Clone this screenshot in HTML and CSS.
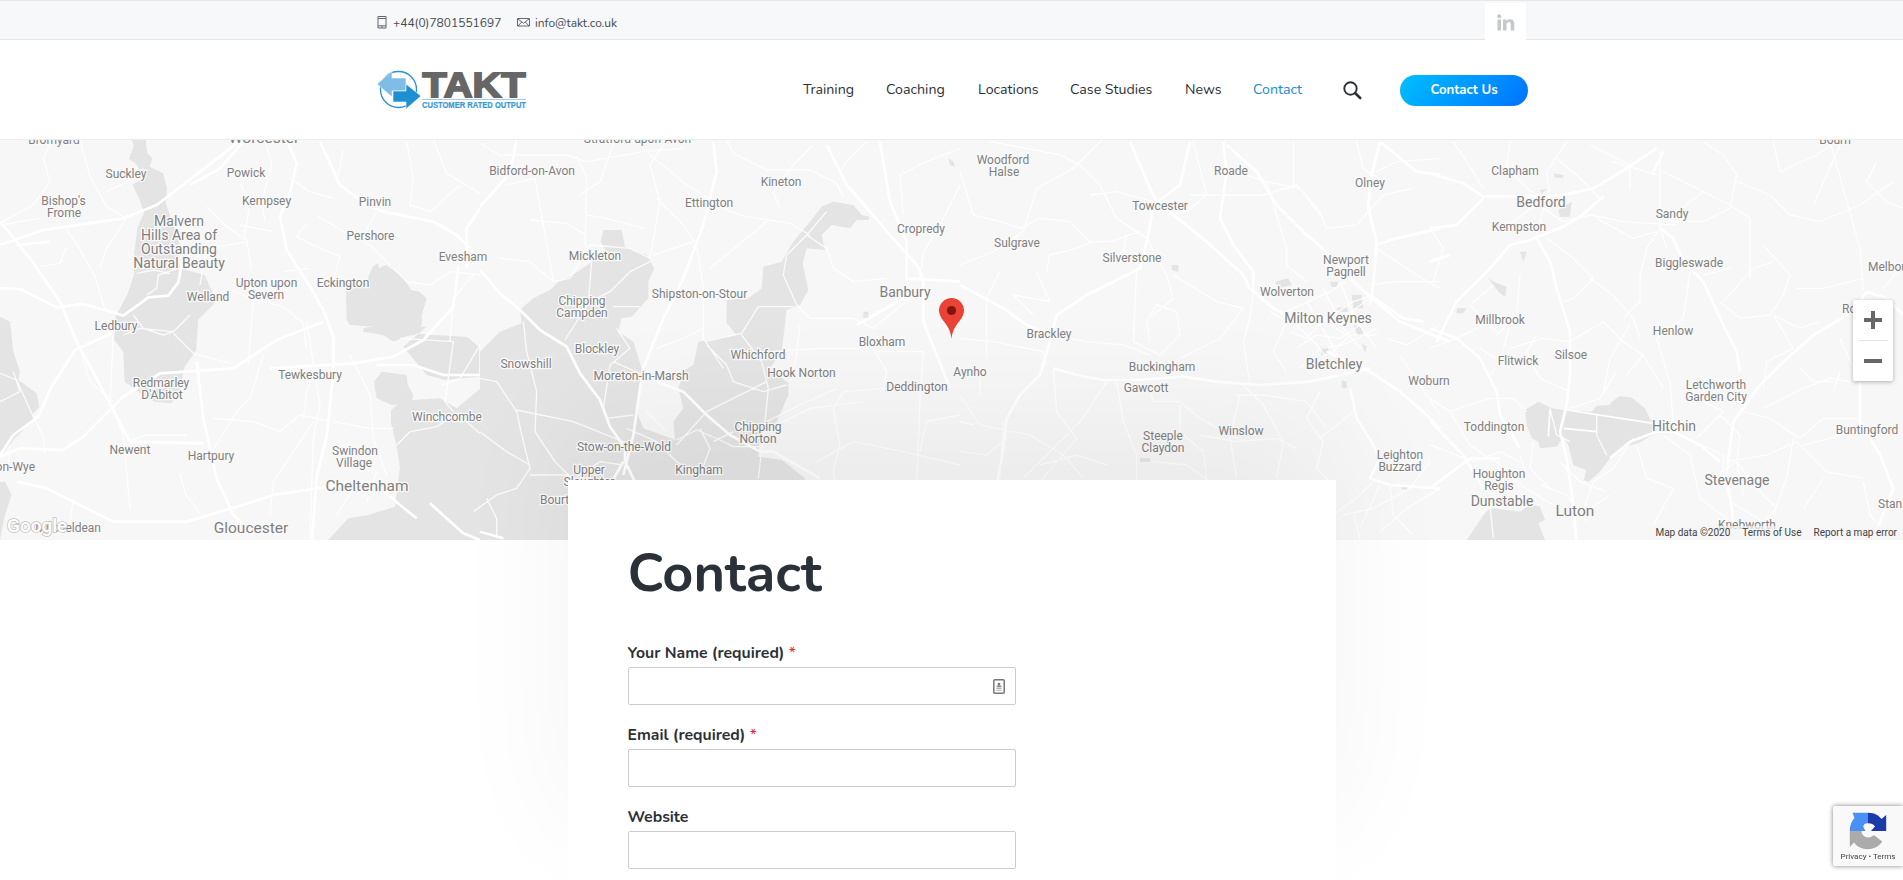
FILE: index.html
```html
<!DOCTYPE html>
<html lang="en">
<head>
<meta charset="utf-8">
<title>Contact - TAKT</title>
<link rel="stylesheet" href="styles.css">
</head>
<body>
<div class="topbar">
  <div class="container topbar-inner">
    <div class="topbar-contacts">
      <span class="contact-item"><svg class="ico-phone" width="10" height="13" viewBox="0 0 10 13"><path d="M1 .5h8v11.500h-8zM1 2.500h8M1 9.800h8M4 11h2" fill="none" stroke="#62676f"/></svg><span class="phone">+44(0)7801551697</span></span>
      <span class="contact-item"><svg class="ico-mail" width="13" height="9" viewBox="0 0 13 9"><path d="M.5 .5h12v7.500h-12zM1 1l5.500 4.200L12 1M1 8l3.700-4M12 8L8.300 4" fill="none" stroke="#555b63" stroke-width=".9"/></svg><span class="email">info@takt.co.uk</span></span>
    </div>
    <a class="linkedin"><svg width="18" height="17" viewBox="0 0 18 17" fill="#c4c7cb"><circle cx="2.200" cy="2.200" r="2"/><path d="M.5 5.500h3.500V16.500H.5zM6 5.500h3.300V7c.8-1.200 2-1.800 3.600-1.800 3 0 4.400 1.800 4.400 4.800v6.500h-3.500v-6c0-1.600-.6-2.500-1.900-2.500-1.500 0-2.400 1-2.400 2.600v5.900H6z"/></svg></a>
  </div>
</div>
<header class="header">
  <div class="container header-inner">
    <svg class="logo" width="152" height="44" viewBox="375 68 152 44">
      <circle cx="398.500" cy="89.500" r="18" fill="none" stroke="#2b8fcb" stroke-width="1.300"/>
      <path d="M377 84l15-13v7h14v13h-14v6z" fill="#7fbde6" stroke="#fff" stroke-width=".6"/>
      <path d="M393 91h13v-7l15 12-15 13v-7h-13z" fill="#1f8fd4" stroke="#fff" stroke-width=".6"/>
      <text class="logo-name" x="422.500" y="97" textLength="103" lengthAdjust="spacingAndGlyphs">TAKT</text>
      <path d="M422 99.500h104" stroke="#9fcdea"/>
      <text class="logo-tag" x="422" y="107.600" textLength="104" lengthAdjust="spacingAndGlyphs">CUSTOMER RATED OUTPUT</text>
    </svg>
    <nav class="nav">
      <a class="n1">Training</a><a class="n2">Coaching</a><a class="n3">Locations</a><a class="n4">Case Studies</a><a class="n5">News</a><a class="n6 active">Contact</a>
      <svg class="search" width="20" height="20" viewBox="0 0 20 20"><circle cx="7.500" cy="7.500" r="6.200" fill="none" stroke="#2b3038" stroke-width="1.900"/><path d="M12.300 12.300l4.900 4.700" stroke="#2b3038" stroke-width="2.600" stroke-linecap="round"/></svg>
      <a class="cta">Contact Us</a>
    </nav>
  </div>
</header>
<section class="map">
<svg class="map-canvas" width="1903" height="400" viewBox="0 140 1903 400">
  <rect y="140" width="1903" height="400" fill="#f7f7f7"/>
  <!-- west -->
  <g transform="translate(0 135) scale(.33333)">
    <g class="land">
      <path d="M395 15h42l5 40 15 15-8 25 40 20 12 45-4 45 22 60 20 60-10 60 30 20 55 15 20 45 10 40-50 50-5 90-35 50-15 70-25 40-50-5-35-20-55-40-4-90-28-36 5-70 35-65 20-60 0-60 10-80 20-45-15-45-20-40 30-18-15-40-25-20 15-40z"/>
      <path d="M0 545l30 15 10 90 20 60-5 25 55 40 8 40-18 20 0 20-60 60-40 50zM0 1040l15 0 20 40-20 60-15 75z"/>
      <path d="M1038 470l60-25 20-50 15-10 5 15 20-10 50 35 25 40 25 5 22 20-15 50 0 30-20 30-45 5-30 5-40-35-80-5-10-15z"/>
      <path d="M1090 580l45-10 70 35 60-30 15 0-70 60 70 85 55 15 102-10V635l-37-30-100-5-60-5-60 25-30-20-60-10z"/>
      <path d="M1145 710l75 10 3 30 17 30-5 25-60 5-45-20-8-50z"/>
      <path d="M1240 795l80-5 50 30 72-60V1215H985l60-65 60-10 80-25 15-120-12-70-15-60 0-40 25-20z"/>
    </g>
    <g class="minor">
      <path d="M155 15l-25 55 20 70-50 70-100 55M240 15l30 110 50 90 60 35M320 170l60-30 50-40M380 250l-60 90-20 60M200 285l35 50 50 90 30 100M120 395l60-10 20-50M410 415l50-10 50 10M440 480l30-20 5-40 60-20M570 380l60-40 110-20M620 215l60 60 60 40 15 90M720 145l30 60-20 110M800 30l15 60-30 110 10 60M620 340l-20 110M700 465l60 30-15 190M770 495l80 20 60 50 10 80M930 400l-80 10M920 265l-30 40 60 30 70 30-20 70M1010 145l20-100M1130 230l-30 50M950 240l80 50 80 40 60 60M1180 400l40 40 70 10 60-40 90 10M1380 150l-90 80-60-20 10-80-20-110M1300 15l40 100 100 60M520 595l60 60 110 30M640 850l120 10 80 30 60-50 90 20M630 960l80-130 40-40 40-130M720 270l100 20M540 1015l15 60 45 60M920 560l40 250-20 100-10 300M340 600l-10 200 40 100 20 220M240 640l30 100 70 60M380 920l60-20 120 0M810 1140l10-100 120-180M1050 660l60 120 10 130 40 110M950 700l-30 70-10 80M0 800l60-30-20-60M220 1090l-15 110M1000 860l110 20 70 0M0 270l120-20M30 930l-5 70M1000 190l-70-20-60-40M1060 1060l-50 80M1130 1010l-30 90"/>
      <path d="M0 715l50 20 50 110 30 60 5 50M370 600l50-20 100 10 50-50M1200 610l160 10-25 180 25 30M1440 630l-60 100-55 20M1420 420l-60 70-10 130M400 540l30 40 60 20 30-10M1190 930l40-40 80-15 60-40 70 60"/>
    </g>
    <g class="major">
      <path d="M0 330l130-45 240-35 100-40 170-130 90-70M0 260l90 110 90 130 50 120 70 130 90 170 220 5 M0 460l60 2 110 55 80-10 90 25 30 10 75-55 60-5 30-40 10-55M570 150l90-50 70-80M50 330l100-10M0 960l40-60 75-55 40-90 70-110 110-50M0 965l60-25 130 5 60-40 120-120 110-70 220-15 130-85 140-55M860 15l30 70-20 90-30 70 20 100 70 110 40 70 30 80 0 110-20 190-30 120-20 270M960 20l60 130 80 60 50 20 150 30 70 40 50 50M1440 220l-40 60 0 120M810 700l250-15 120-20 90-50 90-100 15-120M590 680l20 170 40 180 50 110 60 60M50 1040l90 20 200 100 220 0 200-60 60-20 200-30 100-10 80 70 50 40M1290 1105l100 90 50 20M1130 690l110 0 90 30 110 0"/>
    </g>
  </g>
  <!-- cotswolds to banbury -->
  <g transform="translate(480 135) scale(.33333)">
    <g class="land">
      <path d="M0 650L60 590 125 565 120 525 160 490 210 465 235 440 270 425 330 385 375 345 362 320 370 285 425 285 435 335 500 360 523 400 505 440 505 490 455 545 425 550 415 590 460 620 485 700 470 830 490 880 560 905 585 915 580 860 610 820 595 760 615 705 640 690 655 620 770 600 740 565 740 495 805 490 845 460 850 395 905 380 940 320 990 260 1025 215 1060 200 1120 210 1145 240 1168 245 1165 255 1130 255 1110 280 1055 270 1025 300 1035 345 980 340 968 385 985 465 960 510 920 525 905 650 870 700 925 745 925 780 890 860 840 900 835 965 905 975 975 1030 975 1080 300 1080 300 1215 0 1215z"/>
    </g>
    <g class="minor">
      <path d="M0 25l60 35 110 0 90 0 60 20 170-30 120-10M290 65l30 60-5 200 20 50-10 130-70 110M75 150l90-20 55 310M60 370l90 10 70 60 50-10 60-100 120 10 60 30 30-170-30-110 40-60M530 190l80 80 40 60 20 130 0 150 60 90M150 255l110 10 50 30M320 240l60 10 110 30M510 60l110 90 130 80 50 15 130 20 60 35M740 15l20 40 100 50 130 0 80 40 20 40M1000 30l-60 60-60 80 20 50M1160 20l-60 60-20 30M1040 230l-60 70-60 60-10 60 40 90 40 40 130 0 60 30 120-100M410 0l-50 140-60 40M1440 40l-100 40-80 40 10 120M1440 150l-70 140-40 60-10 80M980 300l60 40 20 60 60 40 100-10M130 560l10 90 30 120-5 120 60 90 80 80M0 730l50 10 60 90 20 90 20 80-40 60-60 20-70 50M110 825l170 35 150 60M0 890l80 60 70 40M150 1020l120 0M20 1090l30 60 0 60M400 515l80 0M510 380l-60 30-60 60-60 30M670 580l-60 30-80 30M640 320l-120 40M410 580l40 60-60 50-20 130 10 30 80-10M400 680l90 40M675 620l110-25 50-80 110 0M785 600l60 80 20 80-10 100-20 170M680 630l60 60 20 50 90 30 70-20M860 740l-180 90-90 100M590 915l60-30 70 30 40 20 80 0M660 880l30 60-30 80M870 650l150-10 110 0M860 860l100-50 110-50M960 570l-10 90-20 80M1180 640l40 70-10 50-120 10-30 50 20 110-20 80 10 60M1190 650l140 0-10 150-10 250M890 870l100-50 160-20M1440 840l-100 20-20 90M1010 980l110-60 150 30 170 40M440 880l90 40 60 60 60 40M270 1040l90-60 70 10M700 920l60-30M500 830l60 60M690 400l60-50 110-90"/>
    </g>
    <g class="major">
      <path d="M110 15l-20 100-90 100M0 405l60 70 60 50 60 60 80 50 40 80 60 80 30 80 50 70M700 20l10 90-40 160-60 160-60 120-60 150-10 60-20 140-30 120M435 920l0 60 30 60M430 980l-40 70M530 740l80 30 70 70 70 60 90 50 40 0 140 80M1040 30l60 120 70 80 60 70 80 90 20 40 0 130 80 200M1200 20l30 180 50 120 0 110 160 10M1130 570l140-80M0 1190l70 20"/>
    </g>
    <path d="M1150 530l15 0 0 18-15 0zM1405 70l15 10 5 15-15-5z" class="town"/>
  </g>
  <!-- brackley to milton keynes -->
  <g transform="translate(960 135) scale(.33333)">
    <g class="town">
      <path d="M635 390l20 0 0 20-20-5zM945 440l40-10 10 20-40 10zM1175 480h30l5 40-30 0zM1180 570l25 5 5 25-15 5zM1205 625l15 10-5 20zM1130 520l30-5 5 15-30 0zM1080 635l25 0 0 20-20 5zM1145 735l15 5 0 20-15 0zM1110 440l25 0-5 15-15 0zM540 970h30v10h-30zM1325 1050l20 5-5 10-15-3z"/>
    </g>
    <g class="minor">
      <path d="M90 20l110 20 100 20 60 30 60 60 50 100 90 60M0 110l40 130 80 20 60 20 60-30 90 10 60 60 60 0 90-30M0 390l100-40 90-60 40-130 110-60 90-90M230 410l40 90-110-20 60 60M260 410l10-50 80-20 50-20M390 180l80-10 110 30M700 20l40 160-60 50-60 10M690 180l220 0 100-30 70 80 20 50 90-10 80-90 90-20M830 110l90 30 100 20 60 80M1000 20l0 140M920 140l60 200 0 50 60 50M1190 20l20 80 60 40M1250 110l60-30 130-10M1250 340l60 40 60 40 70 40M1230 450l80-10 130 0M500 300l-10 50M530 400l-10 220 80 40 60-60-10-70-60-20-30 50 10 60M560 310l60 110 20 70-60 50M640 420l130 80 80 20-70 90-120 60M880 470l-10 80-20 70 20 130M930 530l50 30-40 90 40 60M0 610l100 10 150 30 10 40M80 670l0-180 40-80M270 600l110 20 110 10 80 30M0 780l60 90 150 30 100 60 60 70M60 700l0 80M130 860l-10 170M280 700l10 130 60 80-110 130M440 740l-80 120-90 90-80 80M470 740l20 120 40 100 0 80M560 740l20 60 80 0 60 50 110 60M660 810l0 80 70 60 10 80M840 780l-30 130 20 120M850 750l60 60 60 110-20 110M830 780l80 0 130 20 60 80M1080 770l-40 80 50 70-20 80 50 50M1180 830l-100 80M580 980l100 10 70 50M720 900l110 20 120-10 60 30M1240 1040l-40 40-80 60M1260 1050l-60 130M1290 1050l10 90 60 60M1440 1060l-100 60-80 70M0 950l80 10 60-50M240 990l110-30 90 30M0 860l40 10M1150 1140l90-20 110-60 60-80M1180 1130l20 80M1320 660l60 90 60 90M1280 610l60 20 100-60"/>
      <path d="M990 590l50 20 60-60 60-10 70-50M1010 640l60-40 70 10 90-60M1020 700l60-60 70-10 100-50M1000 560l80 80 40 60M1040 500l70 120 30 50M1090 460l60 120 50 60M1140 440l50 120 60 80M980 530l130-60 50-30M1060 580l120-80 60-20M1110 660l60-60 80 0M930 510l50 40 100 0 80 50"/>
    </g>
    <g class="major">
      <path d="M510 20l60 140 20 40 150 120 110 100 20 40 70 60 80 40 M690 20l-30 130-80 60-10 60-10 50-20 80-160 80-90 60-20 80-30 100-60 60-40 70-10 90-30 170M0 450l130 70 70 50 70 30M790 20l10 90-20 140 40 80 60 80 0 60M800 30l90 80 60 100 80 80 70 60 90 100 70 60 60 50 150 60M1260 20l-30 120-5 80 25 100-10 130-10 60M1250 330l60-20 130-30M1230 480l100 70 60 10M280 700l70 20 80 15 100 0 140-10 100 15 130 10 150-10 180-40M1100 650l130 60 90 60 70 60 50 50M1170 760l20 90 50 80 20 40-30 60 60 20 150 10M1260 20l110 90 70 10"/>
    </g>
  </g>
  <!-- bedford to stevenage -->
  <g transform="translate(1430 135) scale(.33333)">
    <g class="land">
      <path d="M285 825L325 800 365 820 400 825 485 830 500 812 540 810 545 800 570 783 605 788 645 820 665 860 685 890 625 925 580 935 540 970 510 1010 475 1040 462 1035 468 1005 430 990 415 930 400 905 380 935 330 940 325 920 305 910 290 870z"/>
      <path d="M110 1215l45-67 15-20 20-8 80 10 30-20 30 5 15 40-20 10 20 50z"/>
    </g>
    <g class="town">
      <path d="M370 115l30 5 0 8-25 0zM330 165l20-3-15 15zM425 200l-5 45-30 0-5-20zM175 430l25 15 30 10-5 30-20-15zM80 520l30 0-10 15-20 0zM270 350l20 0-10 30z"/>
    </g>
    <g class="minor">
      <path d="M70 20l40 60 50 80M240 20l-10 80 60 60 50 30M410 20l-60 90 10 80M330 200l-80 60-60 10M340 220l-20 80M340 220l60 40 80-20 100 20 160 10M380 70l70 60 60 60M480 30l120 60 0 70M550 80l130 40M690 50l0 230 20 60M700 110l120 60 80 40 60 40 0 180M820 20l60 40 40 60-20 100-80 40-120 0M920 140l100 40 60 60 90 20 120-50 100-70M1030 20l20 90 110-50 60-40M1230 30l-80 180M1340 80l-30 60 60 60 50 20M350 310l80 60 60 60-60 60-30 10M500 250l110 60 70-20M480 430l70 50 60 70 20 60M690 280l-40 60-20 80 0 80-50 50M780 410l-20 140-80 60 40 130 10 130M870 500l60 50 90-10 40-60 20-60-80-90M820 420l80-20M880 500l90-100 60-20M820 170l-80 60M1030 540l60 100-80 40-10 80M1030 540l80 40 60-20M1100 460l80 0 120-30M270 420l-10 120-60 60M190 450l-70 60 80 80M0 640l80-30 80-40M150 640l60 40-30 40M240 570l-20 70M240 640l100-30 80 10 100-60M320 600l-30 50 40 80 90 40M520 560l60 60 60 40-50 60M560 710l-50 80-90 30M600 570l-60 100-20 100M640 660l60 100M0 790l60 40 60 100 70 50M60 830l120-40 70 0 40 40M0 930l130 50 80-30 60 30M190 970l80 80 100 60M270 960l20 60-80 40M310 920l-10 80 60 60M390 980l60 60 80 30M460 1130l30-90 60-40 60-90M620 930l30 100 80 30-60 110M700 900l80 60 30 130 80 60M870 840l60 60-10 80 20 100M890 980l120-20 90-40 90 90 110 20M1090 910l-20 120-40 110M940 830l80 20 90 60 70-60 110 0M820 800l60 30-80 80M1000 820l120-60 80-30 60 10M1290 740l-60-130M1300 1040l20 100 60 70M1180 1030l-60 90M1120 930l80-20 90-30M860 1020l60-40 60 80 60 60-60 60M750 900l130 60 0 60 20 80 100 60M150 1140l30-30 10 100M360 820l20 80 40 20M500 840l0 60 30 60"/>
      <path d="M1200 20l90 320 10 130M1360 460l60-70M1210 770l20-60M1110 700l40 40 60 0M0 280l40 60-30 100M330 1050l80 30 60 80M540 1080l-60 40"/>
    </g>
    <g class="major">
      <path d="M0 115l100 30 60 40 150 0 90-5 90-20 100-60 90-60M0 280l80-10 80-80M20 620l60-120 100-100 60-70 60-15 100-40 50-30 70-60M320 310l40 70 20 80 40 130 0 130-10 90-20 80 20 80 20 140 10 120M0 580l80 30 70 60 50 100 10 70 60 100M690 280l40 30 30 70 60 60 60 130 40 80 10 60M1310 470l-40 60-120 70-100 90-60 60-80 110-20 150 20 150M1310 470l60 20 50 50M1290 740l0 120 60 100 40 100-60 150M540 970l60-50 80-30 50 0 80 40 60 50M0 380l60-20M0 860l100 100 60 100M0 1060l120-90 90 0M700 50l-30 60"/>
      <path class="thin" d="M360 825l-5 80M400 880l100 10M410 825l260 40"/>
    </g>
  </g>
  <g class="labels">
    <text x="54" y="144">Bromyard</text><text x="264" y="142.500" class="l">Worcester</text><text x="126" y="178">Suckley</text><text x="246" y="177">Powick</text><text x="63.500" y="205">Bishop's</text><text x="64" y="217">Frome</text><text x="266.500" y="205">Kempsey</text><text x="375" y="206">Pinvin</text>
    <text x="179" y="226" class="m">Malvern</text><text x="179" y="240" class="m">Hills Area of</text><text x="179" y="254" class="m">Outstanding</text><text x="179" y="268" class="m">Natural Beauty</text>
    <text x="370.500" y="240">Pershore</text><text x="463" y="261">Evesham</text><text x="266.500" y="287">Upton upon</text><text x="266" y="299">Severn</text><text x="343" y="287">Eckington</text><text x="208" y="301">Welland</text><text x="116" y="330">Ledbury</text><text x="310" y="379">Tewkesbury</text><text x="161" y="387">Redmarley</text><text x="162" y="399">D'Abitot</text><text x="447" y="421">Winchcombe</text><text x="130" y="454">Newent</text><text x="211" y="460">Hartpury</text><text x="355" y="455">Swindon</text><text x="354" y="467">Village</text><text x="35" y="471" class="e">on-Wye</text><text x="367" y="491" class="l">Cheltenham</text><text x="251" y="532.500" class="l">Gloucester</text><text x="101" y="532" class="e">Mitcheldean</text>
    <text x="637.500" y="143">Stratford-upon-Avon</text><text x="532" y="175">Bidford-on-Avon</text><text x="781" y="186">Kineton</text><text x="709" y="207">Ettington</text><text x="921" y="233">Cropredy</text><text x="595" y="260">Mickleton</text><text x="905" y="297" class="m">Banbury</text><text x="699.500" y="298">Shipston-on-Stour</text><text x="582" y="305">Chipping</text><text x="582" y="317">Campden</text><text x="597" y="353">Blockley</text><text x="526" y="368">Snowshill</text><text x="758" y="359">Whichford</text><text x="801.500" y="377">Hook Norton</text><text x="641" y="380">Moreton-in-Marsh</text><text x="882" y="346">Bloxham</text><text x="917" y="391">Deddington</text><text x="758" y="431">Chipping</text><text x="758" y="443">Norton</text><text x="624" y="451">Stow-on-the-Wold</text><text x="589" y="474">Upper</text><text x="589" y="486">Slaughter</text><text x="699" y="474">Kingham</text><text x="540" y="504" class="s">Bourton</text>
    <text x="1003" y="164">Woodford</text><text x="1004" y="176">Halse</text><text x="1231" y="175">Roade</text><text x="1370" y="187">Olney</text><text x="1160" y="210">Towcester</text><text x="1017" y="247">Sulgrave</text><text x="1132" y="262">Silverstone</text><text x="1346" y="264">Newport</text><text x="1346" y="276">Pagnell</text><text x="1287" y="296">Wolverton</text><text x="1328" y="323" class="m">Milton Keynes</text><text x="1049" y="338">Brackley</text><text x="1334" y="369" class="m">Bletchley</text><text x="1162" y="371">Buckingham</text><text x="1146" y="392">Gawcott</text><text x="970" y="376">Aynho</text><text x="1429" y="385">Woburn</text><text x="1163" y="440">Steeple</text><text x="1163" y="452">Claydon</text><text x="1241" y="435">Winslow</text><text x="1400" y="459">Leighton</text><text x="1400" y="471">Buzzard</text>
    <text x="1515" y="175">Clapham</text><text x="1541" y="207" class="m">Bedford</text><text x="1519" y="231">Kempston</text><text x="1672" y="218">Sandy</text><text x="1689" y="267">Biggleswade</text><text x="1868" y="271" class="s">Melbourn</text><text x="1842" y="313" class="s">Royston</text><text x="1500" y="324">Millbrook</text><text x="1673" y="335">Henlow</text><text x="1518" y="365">Flitwick</text><text x="1571" y="359">Silsoe</text><text x="1716" y="389">Letchworth</text><text x="1716" y="401">Garden City</text><text x="1494" y="431">Toddington</text><text x="1674" y="431" class="m">Hitchin</text><text x="1867" y="434">Buntingford</text><text x="1499" y="478">Houghton</text><text x="1499" y="490">Regis</text><text x="1502" y="506" class="m">Dunstable</text><text x="1575" y="515.500" class="l">Luton</text><text x="1737" y="485" class="m">Stevenage</text><text x="1878" y="508" class="s">Stansted</text><text x="1747" y="529">Knebworth</text><text x="1835" y="144">Bourn</text>
  </g>
  <path d="M951.500 339c-1-9-4-13-8-18-3-4-4.500-7-4.500-10.500a12.500 12.500 0 0 1 25 0c0 3.500-1.500 6.500-4.500 10.500-4 5-7 9-8 18z" fill="#ea4335"/>
  <circle cx="951.500" cy="310.500" r="4.600" fill="#811411"/>
  <text class="google" x="7" y="532">Google</text>
</svg>
<div class="zoom-control"><span class="plus"></span><span class="divider"></span><span class="minus"></span></div>
<div class="map-legal"><span>Map data ©2020</span><span>Terms of Use</span><span>Report a map error</span></div>
</section>
<main class="card">
  <h1>Contact</h1>
  <form>
    <div class="field"><label>Your Name (required) <b>*</b></label><div class="input"><svg width="12" height="15" viewBox="0 0 12 15"><rect x=".8" y=".8" width="10.400" height="13.400" rx="1" fill="#fff" stroke="#777" stroke-width="1.500"/><circle cx="6" cy="5" r="1.300" fill="#777"/><path d="M3.800 8c0-2.500 4.400-2.500 4.400 0zM3.500 9.500h5M3.500 11.300h5" fill="#888" stroke="#999" stroke-width=".8"/></svg></div></div>
    <div class="field"><label>Email (required) <b>*</b></label><div class="input"></div></div>
    <div class="field"><label>Website</label><div class="input"></div></div>
  </form>
</main>
<aside class="recaptcha">
  <svg width="38" height="38" viewBox="0 0 38 38">
    <path d="M.8 35V19H12.500c0 3.500 3 6.500 6.500 6.500 2.500 0 4.500-1 5.800-2.500l8.400 6.500C28 38.500 12 40.500 5 30.500z" fill="#ababab"/>
    <path d="M19 .8v10.500c-4 0-5 2.500-4.500 4l2 3.700H.8C.8 13 3 8.500 5.500 6L3.500 .8z" fill="#4a90f5"/>
    <path d="M19 .8c7 0 11 3 13.500 6.200L37.200 3v16H22l4-4.500c-1.500-2-3.500-3.200-7-3.200z" fill="#1c3aa9"/>
  </svg>
  <span>Privacy • Terms</span>
</aside>
</body>
</html>
```
FILE: styles.css
```css
* { box-sizing: border-box; }
html, body { height: 100%; }
body { margin: 0; background: #fff; overflow: hidden; font-family: Nunito, Lato, "Open Sans", sans-serif; color: #2b3138; }
.container { width: 1151px; margin: 0 auto 0 377px; display: flex; justify-content: space-between; }
.topbar { height: 40px; background: #f6f8fa; border-top: 1px solid #e6e8ea; border-bottom: 1px solid #e4e6e8; }
.topbar-inner { padding-right: 2px; }
.topbar-contacts { display: flex; gap: 16px; height: 42px; align-items: center; font-size: 12px; color: #464b53; }
.contact-item { display: flex; align-items: center; }
.contact-item span { padding-top: 1px; }
.ico-phone { margin-right: 6px; }
.ico-mail { margin-right: 5px; }
.phone { width: 108px; }
.linkedin { width: 41px; height: 38px; margin-top: 2px; background: #fff; display: flex; align-items: center; justify-content: center; }
.header { height: 100px; background: #fff; border-bottom: 1px solid #ececec; }
.header-inner { height: 101px; align-items: center; }
.logo { margin: 0 0 1px -2px; }
.logo-name { font: 900 35.500px "Liberation Sans", Arial, sans-serif; fill: #666; stroke: #666; stroke-width: 1.800px; }
.logo-tag { font: 700 8.200px "Liberation Sans", Arial, sans-serif; fill: #3d9ad0; stroke: #3d9ad0; stroke-width: .2px; }
.nav { display: flex; align-items: center; font-size: 14.200px; white-space: nowrap; }
.nav a { padding-bottom: 2px; }
.nav .n1 { width: 83px; }
.nav .n2 { width: 92px; }
.nav .n3 { width: 92px; }
.nav .n4 { width: 115px; }
.nav .n5 { width: 68px; }
.nav .n6 { width: 90px; }
.nav .active { color: #2188e0; }
.search { margin-right: 37px; }
.nav .cta { width: 128px; height: 31px; padding: 0; border-radius: 16px; background: linear-gradient(135deg, #00c0ff, #0072ff); color: #fff; font-weight: 700; font-size: 13.200px; line-height: 30px; text-align: center; }
.map { position: relative; height: 400px; overflow: hidden; }
.map-canvas { display: block; }
.land path { fill: #e4e4e4; }
.town { fill: #e4e4e4; }
.minor path { fill: none; stroke: #fff; stroke-width: 4; stroke-linejoin: round; opacity: .85; }
.major path { fill: none; stroke: #fff; stroke-width: 8; stroke-linejoin: round; }
.major .thin { stroke-width: 5; }
.labels text { font: 12px Roboto, sans-serif; fill: #7f7f7f; stroke: #fafafa; stroke-width: 2.500px; paint-order: stroke; text-anchor: middle; }
.labels text.m { font-size: 14px; }
.labels text.l { font-size: 15.500px; }
.labels text.s { text-anchor: start; }
.labels text.e { text-anchor: end; }
.google { font: 500 19px Roboto, sans-serif; fill: #fff; stroke: #c0c0c0; stroke-width: 1.500px; paint-order: stroke; }
.zoom-control { position: absolute; right: 10px; top: 160px; width: 40px; height: 81px; background: #fff; border-radius: 2px; box-shadow: 0 1px 4px rgba(0,0,0,.3); display: flex; flex-direction: column; align-items: center; }
.plus { width: 18px; height: 18px; margin: 11px 0; background: linear-gradient(#666,#666) center/18px 4px no-repeat, linear-gradient(#666,#666) center/4px 18px no-repeat; }
.divider { width: 30px; height: 1px; background: #e6e6e6; }
.minus { width: 18px; height: 4px; margin-top: 18px; background: #666; }
.map-legal { position: absolute; right: 0; bottom: 0; height: 14px; padding: 0 6px; display: flex; gap: 12px; font: 10px/14px Roboto, sans-serif; color: #444; background: rgba(245,245,245,.7); white-space: nowrap; }
.card { position: relative; width: 768px; height: 400px; margin: -60px auto 0; background: #fff; padding: 60px 60px 0; box-shadow: 0 -60px 120px rgba(0,0,0,.05); }
h1 { margin: 0; font-size: 54px; line-height: 66px; font-weight: 700; }
form { margin-top: 37px; }
.field { height: 82px; }
.field:last-child { height: 62px; }
label { display: block; height: 24px; font-size: 15.800px; line-height: 20px; font-weight: 700; white-space: nowrap; }
label b { color: #e02b2b; font-weight: 400; }
.input { width: 388px; height: 38px; border: 1px solid #ccc; border-radius: 2px; background: #fff; display: flex; align-items: center; justify-content: flex-end; padding-right: 10px; }
.recaptcha { position: fixed; right: 0; bottom: 14px; width: 70px; height: 60px; background: #f9f9f9; border-radius: 2px 0 0 2px; box-shadow: 0 0 5px #808080; display: flex; flex-direction: column; align-items: center; padding-top: 6px; }
.recaptcha span { font: 8px/10px Roboto, sans-serif; color: #444; margin-top: 2px; white-space: nowrap; }
```
